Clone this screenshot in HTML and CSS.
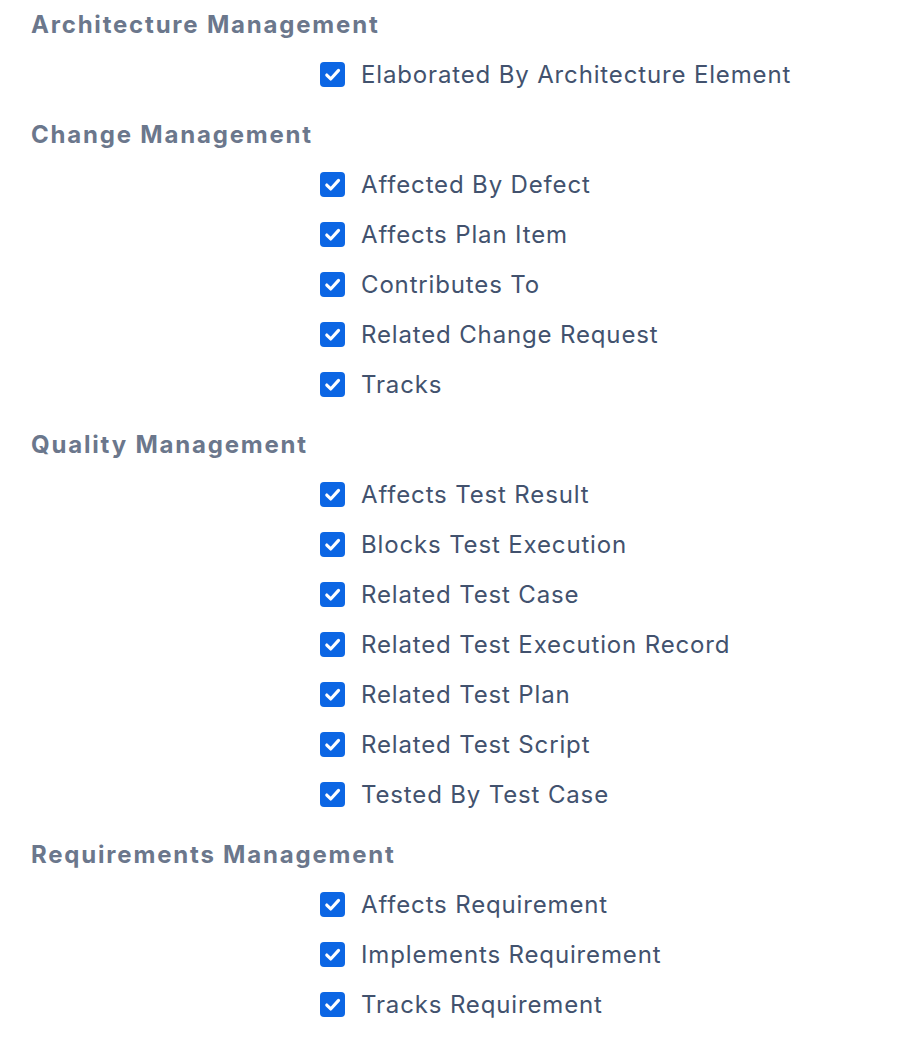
FILE: index.html
```html
<!DOCTYPE html>
<html>
<head>
<meta charset="utf-8">
<link rel="stylesheet" href="styles.css">
</head>
<body>
<div class="page">
  <section class="group">
    <h3 class="group-title">Architecture Management</h3>
    <ul class="opts">
      <li class="opt"><span class="cb"><svg viewBox="0 0 24 24"><path d="M6.5 12.5l3.8 3.8 7.5-8.3"/></svg></span>Elaborated By Architecture Element</li>
    </ul>
  </section>
  <section class="group">
    <h3 class="group-title">Change Management</h3>
    <ul class="opts">
      <li class="opt"><span class="cb"><svg viewBox="0 0 24 24"><path d="M6.5 12.5l3.8 3.8 7.5-8.3"/></svg></span>Affected By Defect</li>
      <li class="opt"><span class="cb"><svg viewBox="0 0 24 24"><path d="M6.5 12.5l3.8 3.8 7.5-8.3"/></svg></span>Affects Plan Item</li>
      <li class="opt"><span class="cb"><svg viewBox="0 0 24 24"><path d="M6.5 12.5l3.8 3.8 7.5-8.3"/></svg></span>Contributes To</li>
      <li class="opt"><span class="cb"><svg viewBox="0 0 24 24"><path d="M6.5 12.5l3.8 3.8 7.5-8.3"/></svg></span>Related Change Request</li>
      <li class="opt"><span class="cb"><svg viewBox="0 0 24 24"><path d="M6.5 12.5l3.8 3.8 7.5-8.3"/></svg></span>Tracks</li>
    </ul>
  </section>
  <section class="group">
    <h3 class="group-title">Quality Management</h3>
    <ul class="opts">
      <li class="opt"><span class="cb"><svg viewBox="0 0 24 24"><path d="M6.5 12.5l3.8 3.8 7.5-8.3"/></svg></span>Affects Test Result</li>
      <li class="opt"><span class="cb"><svg viewBox="0 0 24 24"><path d="M6.5 12.5l3.8 3.8 7.5-8.3"/></svg></span>Blocks Test Execution</li>
      <li class="opt"><span class="cb"><svg viewBox="0 0 24 24"><path d="M6.5 12.5l3.8 3.8 7.5-8.3"/></svg></span>Related Test Case</li>
      <li class="opt"><span class="cb"><svg viewBox="0 0 24 24"><path d="M6.5 12.5l3.8 3.8 7.5-8.3"/></svg></span>Related Test Execution Record</li>
      <li class="opt"><span class="cb"><svg viewBox="0 0 24 24"><path d="M6.5 12.5l3.8 3.8 7.5-8.3"/></svg></span>Related Test Plan</li>
      <li class="opt"><span class="cb"><svg viewBox="0 0 24 24"><path d="M6.5 12.5l3.8 3.8 7.5-8.3"/></svg></span>Related Test Script</li>
      <li class="opt"><span class="cb"><svg viewBox="0 0 24 24"><path d="M6.5 12.5l3.8 3.8 7.5-8.3"/></svg></span>Tested By Test Case</li>
    </ul>
  </section>
  <section class="group">
    <h3 class="group-title">Requirements Management</h3>
    <ul class="opts">
      <li class="opt"><span class="cb"><svg viewBox="0 0 24 24"><path d="M6.5 12.5l3.8 3.8 7.5-8.3"/></svg></span>Affects Requirement</li>
      <li class="opt"><span class="cb"><svg viewBox="0 0 24 24"><path d="M6.5 12.5l3.8 3.8 7.5-8.3"/></svg></span>Implements Requirement</li>
      <li class="opt"><span class="cb"><svg viewBox="0 0 24 24"><path d="M6.5 12.5l3.8 3.8 7.5-8.3"/></svg></span>Tracks Requirement</li>
    </ul>
  </section>
</div>
</body>
</html>
```

FILE: styles.css
```css
html, body {
  margin: 0;
  padding: 0;
  background: #ffffff;
}
.page {
  font-family: "Inter", "Open Sans", sans-serif;
  padding: 0 0 0 31px;
  display: flex;
  flex-direction: column;
  gap: 10px;
  margin-top: -1px;
}
.group-title {
  margin: 0;
  height: 50px;
  line-height: 52px;
  font-size: 24px;
  font-weight: 700;
  color: #6b778c;
  letter-spacing: 1.8px;
}
.opts {
  list-style: none;
  margin: 0;
  padding: 0 0 0 289px;
}
.opt {
  display: flex;
  align-items: center;
  height: 50px;
  font-size: 24px;
  color: #42526e;
  letter-spacing: 0.85px;
}
.cb {
  width: 25px;
  height: 25px;
  border-radius: 4px;
  background: #0c66e4;
  margin-right: 16px;
  display: flex;
  align-items: center;
  justify-content: center;
  flex: none;
}
.cb svg {
  width: 25px;
  height: 25px;
  fill: none;
  stroke: #ffffff;
  stroke-width: 3;
  stroke-linecap: round;
  stroke-linejoin: round;
}
```
